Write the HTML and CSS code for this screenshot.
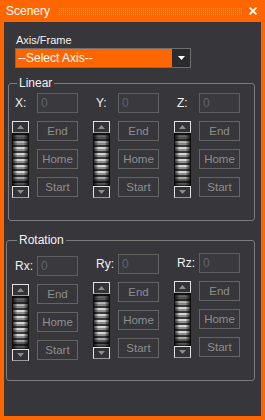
FILE: index.html
```html
<!DOCTYPE html>
<html lang="en">
<head>
    <meta charset="UTF-8" />
    <meta name="viewport" content="width=device-width, initial-scale=1.0" />
    <title>Scenery</title>
    <link rel="stylesheet" href="styles.css">
</head>
<body>

    <div class="window">
        <div class="titlebar">
            <span class="title">Scenery</span>
            <span class="grip"></span>
            <svg class="close" width="8" height="8" viewBox="0 0 8 8">
                <path d="M0.5 0.5 L7.5 7.5 M7.5 0.5 L0.5 7.5" stroke="#fff" stroke-width="1.8" />
            </svg>
        </div>

        <div class="panel">
            <div class="field-label">Axis/Frame</div>
            <div class="combo">
                <span class="combo-text">--Select Axis--</span>
                <span class="combo-btn">
                    <svg width="7" height="4" viewBox="0 0 7 4"><path d="M0 0 H7 L3.5 4 Z" fill="#fff" /></svg>
                </span>
            </div>

            <fieldset class="group group-linear">
                <legend>Linear</legend>
                <div class="axes">
                    <div class="axis">
                        <div class="axis-head"><span class="axis-label">X:</span><div class="num">0</div></div>
                        <div class="axis-body">
                            <div class="slider">
                                <div class="slider-btn"><svg width="7" height="4" viewBox="0 0 7 4"><path d="M3.5 0 L7 4 H0 Z" fill="#8c8c8c" /></svg></div>
                                <div class="slider-track"></div>
                                <div class="slider-btn"><svg width="7" height="4" viewBox="0 0 7 4"><path d="M0 0 H7 L3.5 4 Z" fill="#8c8c8c" /></svg></div>
                            </div>
                            <div class="btn-stack">
                                <button class="btn">End</button>
                                <button class="btn">Home</button>
                                <button class="btn">Start</button>
                            </div>
                        </div>
                    </div>
                    <div class="axis">
                        <div class="axis-head"><span class="axis-label">Y:</span><div class="num">0</div></div>
                        <div class="axis-body">
                            <div class="slider">
                                <div class="slider-btn"><svg width="7" height="4" viewBox="0 0 7 4"><path d="M3.5 0 L7 4 H0 Z" fill="#8c8c8c" /></svg></div>
                                <div class="slider-track"></div>
                                <div class="slider-btn"><svg width="7" height="4" viewBox="0 0 7 4"><path d="M0 0 H7 L3.5 4 Z" fill="#8c8c8c" /></svg></div>
                            </div>
                            <div class="btn-stack">
                                <button class="btn">End</button>
                                <button class="btn">Home</button>
                                <button class="btn">Start</button>
                            </div>
                        </div>
                    </div>
                    <div class="axis">
                        <div class="axis-head"><span class="axis-label">Z:</span><div class="num">0</div></div>
                        <div class="axis-body">
                            <div class="slider">
                                <div class="slider-btn"><svg width="7" height="4" viewBox="0 0 7 4"><path d="M3.5 0 L7 4 H0 Z" fill="#8c8c8c" /></svg></div>
                                <div class="slider-track"></div>
                                <div class="slider-btn"><svg width="7" height="4" viewBox="0 0 7 4"><path d="M0 0 H7 L3.5 4 Z" fill="#8c8c8c" /></svg></div>
                            </div>
                            <div class="btn-stack">
                                <button class="btn">End</button>
                                <button class="btn">Home</button>
                                <button class="btn">Start</button>
                            </div>
                        </div>
                    </div>
                </div>
            </fieldset>

            <fieldset class="group group-rotation">
                <legend>Rotation</legend>
                <div class="axes">
                    <div class="axis">
                        <div class="axis-head"><span class="axis-label">Rx:</span><div class="num">0</div></div>
                        <div class="axis-body">
                            <div class="slider">
                                <div class="slider-btn"><svg width="7" height="4" viewBox="0 0 7 4"><path d="M3.5 0 L7 4 H0 Z" fill="#8c8c8c" /></svg></div>
                                <div class="slider-track"></div>
                                <div class="slider-btn"><svg width="7" height="4" viewBox="0 0 7 4"><path d="M0 0 H7 L3.5 4 Z" fill="#8c8c8c" /></svg></div>
                            </div>
                            <div class="btn-stack">
                                <button class="btn">End</button>
                                <button class="btn">Home</button>
                                <button class="btn">Start</button>
                            </div>
                        </div>
                    </div>
                    <div class="axis">
                        <div class="axis-head"><span class="axis-label">Ry:</span><div class="num">0</div></div>
                        <div class="axis-body">
                            <div class="slider">
                                <div class="slider-btn"><svg width="7" height="4" viewBox="0 0 7 4"><path d="M3.5 0 L7 4 H0 Z" fill="#8c8c8c" /></svg></div>
                                <div class="slider-track"></div>
                                <div class="slider-btn"><svg width="7" height="4" viewBox="0 0 7 4"><path d="M0 0 H7 L3.5 4 Z" fill="#8c8c8c" /></svg></div>
                            </div>
                            <div class="btn-stack">
                                <button class="btn">End</button>
                                <button class="btn">Home</button>
                                <button class="btn">Start</button>
                            </div>
                        </div>
                    </div>
                    <div class="axis">
                        <div class="axis-head"><span class="axis-label">Rz:</span><div class="num">0</div></div>
                        <div class="axis-body">
                            <div class="slider">
                                <div class="slider-btn"><svg width="7" height="4" viewBox="0 0 7 4"><path d="M3.5 0 L7 4 H0 Z" fill="#8c8c8c" /></svg></div>
                                <div class="slider-track"></div>
                                <div class="slider-btn"><svg width="7" height="4" viewBox="0 0 7 4"><path d="M0 0 H7 L3.5 4 Z" fill="#8c8c8c" /></svg></div>
                            </div>
                            <div class="btn-stack">
                                <button class="btn">End</button>
                                <button class="btn">Home</button>
                                <button class="btn">Start</button>
                            </div>
                        </div>
                    </div>
                </div>
            </fieldset>
        </div>
    </div>

</body>
</html>
```

FILE: styles.css
```css
:root {
    --accent: #ff6600;
    --panel: #37363b;
    --line: #7c7c7c;
    --control: #3a393e;
    --text: #f2f2f2;
    --dim: #8e8e8e;
}

* {
    box-sizing: border-box;
}

body {
    margin: 0;
    padding: 0;
    background: var(--accent);
    font-family: "Liberation Sans", Arial, sans-serif;
    font-size: 11px;
    color: var(--text);
}

.window {
    width: 265px;
    height: 420px;
    background: var(--accent);
}

.titlebar {
    height: 22px;
    display: flex;
    align-items: center;
    padding: 0 8px 0 6px;
}

.title {
    font-size: 12px;
    color: #fff;
}

/* dotted drag grip */
.grip {
    flex: 1;
    height: 7px;
    margin: 1px 7px 0 8px;
    background-image:
        linear-gradient(90deg, var(--accent) 1px, transparent 1px),
        linear-gradient(#ff9a58 1px, var(--accent) 1px);
    background-size: 2px 2px;
}

.close {
    display: block;
}

.panel {
    height: 394px;
    margin: 0 4px;
    padding-top: 12px;
    background: var(--panel);
}

.field-label {
    margin-left: 12px;
    line-height: 13px;
    margin-bottom: 1px;
}

.combo {
    display: flex;
    width: 176px;
    height: 20px;
    margin-left: 11px;
    border: 1px solid #6e6e6e;
    background: var(--accent);
}

    .combo-text {
        flex: 1;
        padding-left: 2px;
        line-height: 18px;
        font-size: 12px;
        color: #fff;
    }

    .combo-btn {
        width: 18px;
        display: flex;
        align-items: center;
        justify-content: center;
        background: #2b2b2e;
    }

.group {
    border: 1px solid var(--line);
    border-radius: 3px;
    min-width: 0;
}

    .group legend {
        line-height: 14px;
        padding: 0 2px;
        margin-left: 5px;
        font-size: 12px;
    }

.group-linear {
    margin: 8px 6px 0 4px;
    padding: 3px 0 22px 3px;
}

.group-rotation {
    margin: 12px 6px 0 2px;
    padding: 6px 0 19px 5px;
}

    .group-rotation .axis:nth-child(1) {
        padding-top: 3px;
    }

    .group-rotation .axis:nth-child(2) {
        padding-top: 1px;
    }

.axes {
    display: grid;
    grid-template-columns: repeat(3, 66px);
    column-gap: 15px;
    align-items: start;
}

.axis-head {
    display: flex;
    align-items: center;
    justify-content: space-between;
}

.axis-label {
    padding-left: 3px;
    font-size: 12px;
}

.num {
    width: 41px;
    height: 20px;
    padding-left: 3px;
    line-height: 18px;
    border: 1px solid #5e5e5e;
    background: var(--control);
    color: #5c636c;
    font-size: 12px;
}

.axis-body {
    display: flex;
    gap: 8px;
    margin-top: 8px;
}

.slider {
    width: 17px;
    height: 77px;
    display: flex;
    flex-direction: column;
}

.slider-btn {
    height: 12px;
    display: flex;
    align-items: center;
    justify-content: center;
    border: 1px solid #e2e2e2;
    border-bottom-color: #9a9a9a;
    background: #333236;
}

.slider-track {
    flex: 1;
    border-left: 1px solid #0c0c0c;
    border-right: 1px solid #0c0c0c;
    background:
        linear-gradient(180deg, rgba(0,0,0,.75), rgba(0,0,0,0) 22%, rgba(0,0,0,0) 78%, rgba(0,0,0,.75)),
        linear-gradient(90deg, rgba(0,0,0,.7), rgba(0,0,0,0) 30%, rgba(0,0,0,0) 70%, rgba(0,0,0,.7)),
        repeating-linear-gradient(180deg, #3a3a3a 0 2px, #d6d6d6 2px 4px, #8e8e8e 4px 6px);
}

.btn-stack {
    display: flex;
    flex-direction: column;
    gap: 8px;
}

.btn {
    width: 41px;
    height: 20px;
    padding: 0;
    border: 1px solid #646464;
    background: var(--panel);
    color: var(--dim);
    font-family: inherit;
    font-size: 11.5px;
}
```
